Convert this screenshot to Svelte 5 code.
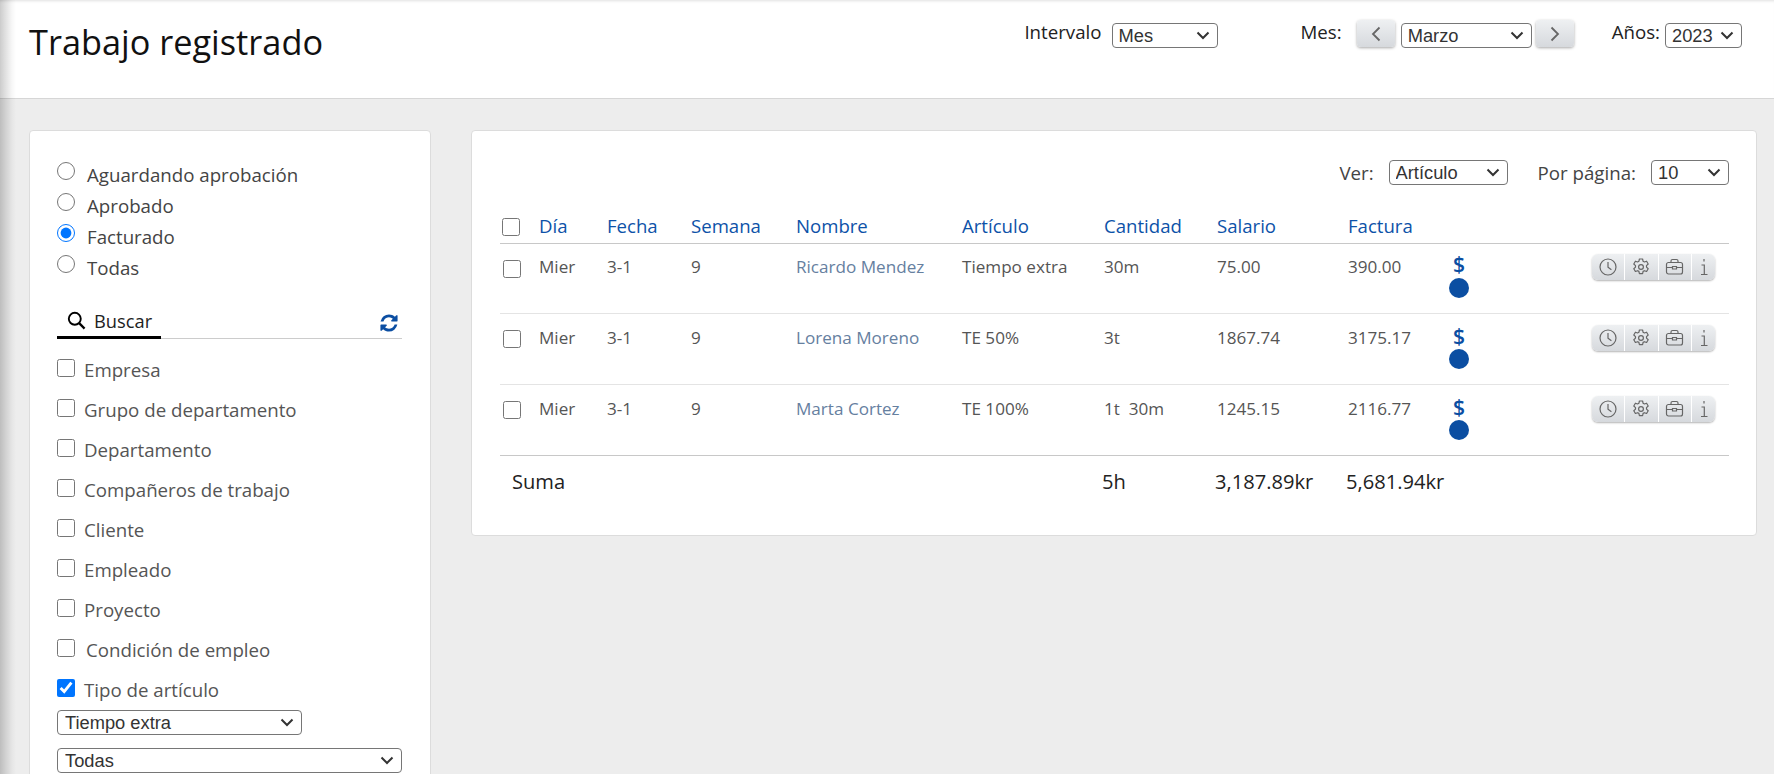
<script>
  const radios = [
    { label: 'Aguardando aprobación', checked: false },
    { label: 'Aprobado', checked: false },
    { label: 'Facturado', checked: true },
    { label: 'Todas', checked: false }
  ];
  const filters = ['Empresa', 'Grupo de departamento', 'Departamento', 'Compañeros de trabajo', 'Cliente', 'Empleado', 'Proyecto', 'Condición de empleo'];
  const heads = ['Día', 'Fecha', 'Semana', 'Nombre', 'Artículo', 'Cantidad', 'Salario', 'Factura'];
  const rows = [
    ['Mier', '3-1', '9', 'Ricardo Mendez', 'Tiempo extra', '30m', '75.00', '390.00'],
    ['Mier', '3-1', '9', 'Lorena Moreno', 'TE 50%', '3t', '1867.74', '3175.17'],
    ['Mier', '3-1', '9', 'Marta Cortez', 'TE 100%', '1t\u00a0\u00a030m', '1245.15', '2116.77']
  ];
</script>

<div class="page">
  <div class="edge"></div>
  <header class="top">
    <h1>Trabajo registrado</h1>
    <div class="controls">
      <span class="lbl l-int">Intervalo</span>
      <select class="s-int"><option>Mes</option></select>
      <span class="lbl l-mes">Mes:</span>
      <button class="nav" aria-label="Anterior"><svg width="12" height="16" viewBox="0 0 12 16"><path d="M9.500 1.500 3 8l6.500 6.500" fill="none" stroke="#666" stroke-width="1.800"/></svg></button>
      <select class="s-mes"><option>Marzo</option></select>
      <button class="nav" aria-label="Siguiente"><svg width="12" height="16" viewBox="0 0 12 16"><path d="M2.500 1.500 9 8l-6.500 6.500" fill="none" stroke="#666" stroke-width="1.800"/></svg></button>
      <span class="lbl l-anos">Años:</span>
      <select class="s-anos"><option>2023</option></select>
    </div>
  </header>

  <main class="content">
    <aside class="card side">
      <div class="radios">
        {#each radios as r}
          <label class="radio"><input type="radio" name="st" checked={r.checked} /><span>{r.label}</span></label>
        {/each}
      </div>
      <div class="search">
        <div class="tab">
          <svg width="19" height="19" viewBox="0 0 20 20"><circle cx="8.200" cy="8.200" r="6.300" fill="none" stroke="#000" stroke-width="2"/><path d="m12.800 12.800 5.700 5.700" stroke="#000" stroke-width="2.400"/></svg>
          <span>Buscar</span>
        </div>
        <svg class="sync" width="20" height="20" viewBox="0 0 1792 1792"><path fill="#0b4ea2" d="M1639 1056q0 5-1 7-64 268-268 434.500t-478 166.500q-146 0-282.500-55t-243.500-157l-129 129q-19 19-45 19t-45-19-19-45v-448q0-26 19-45t45-19h448q26 0 45 19t19 45-19 45l-137 137q71 66 161 102t187 36q134 0 250-65t186-179q11-17 53-117 8-23 30-23h192q13 0 22.500 9.500t9.500 22.500zm25-800v448q0 26-19 45t-45 19h-448q-26 0-45-19t-19-45 19-45l138-138q-148-137-349-137-134 0-250 65t-186 179q-11 17-53 117-8 23-30 23h-199q-13 0-22.500-9.500t-9.500-22.500v-7q65-268 270-434.500t480-166.500q146 0 284 55.500t245 156.500l130-129q19-19 45-19t45 19 19 45z"/></svg>
      </div>
      <div class="filters">
        {#each filters as f, i}
          <label class="check" class:wide={i === 7}><input type="checkbox" /><span>{f}</span></label>
        {/each}
        <label class="check"><input type="checkbox" checked /><span>Tipo de artículo</span></label>
      </div>
      <select class="s-tipo"><option>Tiempo extra</option></select>
      <select class="s-todas"><option>Todas</option></select>
    </aside>

    <section class="card list">
      <div class="tools">
        <span class="lbl l-ver">Ver:</span>
        <select class="s-ver"><option>Artículo</option></select>
        <span class="lbl l-por">Por página:</span>
        <select class="s-por"><option>10</option></select>
      </div>
      <div class="grid head">
        <input type="checkbox" />
        {#each heads as h}<span>{h}</span>{/each}
      </div>
      {#each rows as row, ri}
        <div class="grid row" class:first={ri === 0} class:last={ri === 2}>
          <input type="checkbox" />
          {#each row as c, i}<span class:name={i === 3}>{c}</span>{/each}
          <div class="status"><span class="dollar">$</span><span class="dot"></span></div>
          <div class="actions">
            <button aria-label="Tiempo"><svg width="18" height="18" viewBox="0 0 18 18" fill="none" stroke="#666" stroke-width="1.200"><circle cx="9" cy="9" r="8"/><path d="M9 4v5.200l3.400 2.600"/></svg></button>
            <button aria-label="Ajustes"><svg width="18" height="18" viewBox="0 0 18 18" fill="none" stroke="#666" stroke-width="1.200"><circle cx="9" cy="9" r="2.400"/><path d="M7.400 1h3.200l.5 2.300 1.300.7 2.200-.8 1.600 2.800-1.700 1.600v1.500l1.700 1.600-1.600 2.800-2.200-.8-1.300.7-.5 2.300H7.400l-.5-2.300-1.300-.7-2.200.8-1.600-2.800 1.700-1.600V7.600L1.800 6l1.600-2.800 2.200.8 1.300-.7z" stroke-linejoin="round"/></svg></button>
            <button aria-label="Trabajo"><svg width="19" height="18" viewBox="0 0 19 18" fill="none" stroke="#666" stroke-width="1.200"><rect x="1.500" y="4.500" width="16" height="11.500" rx="2"/><path d="M6 4.500V3a1.500 1.500 0 0 1 1.500-1.500h4A1.500 1.500 0 0 1 13 3v1.500M1.500 9.500h6M11.500 9.500h6M7.500 8.500h4v2.500h-4z"/></svg></button>
            <button aria-label="Información" class="i"><svg width="10" height="18" viewBox="0 0 10 18" fill="none" stroke="#666" stroke-width="1.200"><path d="M5 1v2.500M2.500 7H5.300v9M2 16.500h6.500"/></svg></button>
          </div>
        </div>
      {/each}
      <div class="grid sum">
        <span class="suma">Suma</span>
        <span class="v1">5h</span>
        <span class="v2">3,187.89kr</span>
        <span class="v3">5,681.94kr</span>
      </div>
    </section>
  </main>
</div>

<style>
  :global(body) { margin: 0; background: #ededed; font-family: "Open Sans", sans-serif; }
  .page { position: relative; height: 774px; overflow: hidden; background: #ededed; color: #333; }
  .edge { position: absolute; left: 0; top: 0; bottom: 0; width: 16px; z-index: 2; pointer-events: none; background: linear-gradient(to right, rgba(0,0,0,.2), rgba(0,0,0,.13) 30%, rgba(0,0,0,.03) 75%, rgba(0,0,0,0)); }
  .top { height: 99px; box-sizing: border-box; background: #fff; border-bottom: 1px solid #d6d6d6; box-shadow: inset 0 3px 3px -2px rgba(0,0,0,.12); display: flex; justify-content: space-between; padding: 0 32px 0 29px; position: relative; }
  h1 { margin: 19px 0 0; font-size: 34.300px; line-height: 46px; font-weight: 400; color: #111; }
  .controls { display: flex; align-items: flex-start; padding-top: 20px; }
  .lbl { font-size: 18.700px; line-height: 24px; color: #222; white-space: nowrap; }
  .l-int { margin-right: 10px; }
  .l-mes { margin-left: 83px; margin-right: 15px; }
  .l-anos { margin-left: 38px; margin-right: 5px; }
  select {
    appearance: none;
    -webkit-appearance: none;
    height: 25px;
    box-sizing: border-box;
    font-family: "Liberation Sans", Arial, sans-serif;
    font-size: 18.300px;
    color: #333;
    background-color: #fff;
    background-image: url("data:image/svg+xml,%3Csvg xmlns='http://www.w3.org/2000/svg' width='14' height='9' viewBox='0 0 14 9'%3E%3Cpath d='M1.500 1.500 7 7l5.500-5.500' fill='none' stroke='%23333' stroke-width='2'/%3E%3C/svg%3E");
    background-repeat: no-repeat;
    background-position: right 7px center;
    border: 1px solid #767676;
    border-radius: 4px;
    padding: 0 0 0 6px;
    display: block;
  }
  .controls select { margin-top: 3px; }
  .s-int { width: 106px; }
  .s-mes { width: 131px; margin: 3px 4px 0 6px; }
  .s-anos { width: 77px; }
  .nav { width: 38px; height: 27px; padding: 0; display: flex; align-items: center; justify-content: center; border: 0; border-radius: 4px; background: linear-gradient(#eef0f2, #d6d9dd); box-shadow: 0 1px 3px rgba(0,0,0,.35); }
  .content { display: flex; gap: 40px; padding: 31px 17px 0 29px; align-items: flex-start; }
  .card { background: #fff; border: 1px solid #dcdcdc; border-radius: 4px; box-sizing: border-box; }
  .side { width: 402px; flex: none; padding: 31px 27px 30px; }
  .radios { display: flex; flex-direction: column; gap: 7px; }
  .radio { display: flex; align-items: flex-start; height: 24px; font-size: 18.700px; color: #444; line-height: 24px; }
  .radio input { width: 18px; height: 18px; margin: 0 12px 0 0; }
  .radio span { position: relative; top: 1px; }
  .search { display: flex; justify-content: space-between; align-items: flex-end; margin-top: 20px; height: 40px; border-bottom: 1px solid #ccc; box-sizing: border-box; width: 345px; padding-right: 3px; }
  .tab { width: 104px; box-sizing: border-box; height: 33px; padding-left: 10px; display: flex; gap: 8px; font-size: 18.300px; color: #222; border-bottom: 3px solid #000; margin-bottom: -1px; line-height: 30px; align-items: flex-start; }
  .tab svg { margin-top: 5px; }
  .sync { margin-bottom: 5px; }
  .filters { display: flex; flex-direction: column; gap: 16px; margin-top: 20px; }
  .check { display: flex; align-items: flex-start; height: 24px; font-size: 18.700px; line-height: 24px; color: #555; }
  .check input { width: 18px; height: 18px; margin: 0 9px 0 0; }
  .check.wide input { margin-right: 11px; }
  .check span { position: relative; top: -1px; }
  .s-tipo { width: 245px; margin-top: 7px; padding-left: 7px; }
  .s-todas { width: 345px; margin-top: 13px; padding-left: 7px; }
  .list { flex: 1; height: 406px; padding: 29px 27px 0 28px; }
  .tools { display: flex; justify-content: flex-end; align-items: flex-start; height: 53px; }
  .tools .lbl { line-height: 25px; color: #444; }
  .l-ver { margin-right: 15px; }
  .s-ver { width: 119px; }
  .l-por { margin-left: 30px; margin-right: 15px; }
  .s-por { width: 78px; }
  .grid { display: grid; grid-template-columns: 39px 68px 84px 105px 166px 142px 113px 131px 100px 22px 1fr; width: 1229px; }
  .grid > input { width: 18px; height: 18px; margin: 0; }
  .head { height: 30px; border-bottom: 1px solid #c8c8c8; box-sizing: content-box; font-size: 18.600px; line-height: 26px; color: #0d52a8; }
  .head > input { margin-left: 2px; margin-top: 5px; }
  .row { height: 69px; padding-top: 1px; border-bottom: 1px solid #e4e4e4; font-size: 17.100px; color: #555; line-height: 22px; }
  .row.first { padding-top: 0; }
  .row > span { margin-top: 12px; white-space: nowrap; }
  .row.last { border-bottom-color: #c8c8c8; }
  .row > input { margin: 15px 0 0 3px; }
  .row.first > input { margin-top: 16px; }
  .name { color: #66809f; }
  .status { grid-column: 10; display: flex; flex-direction: column; align-items: center; margin-top: 11px; }
  .row.first .status { margin-top: 10px; }
  .dollar { font-size: 21px; line-height: 21px; font-weight: 600; color: #0b4ea2; height: 21px; }
  .dot { width: 20px; height: 20px; border-radius: 50%; background: #0b4ea2; margin-top: 2px; }
  .row.first .dot { margin-top: 3px; }
  .actions { grid-column: 11; justify-self: end; margin: 10px 14px 0 0; display: flex; height: 26px; border-radius: 6px; overflow: hidden; box-shadow: 0 1px 2px rgba(0,0,0,.3); }
  .actions button { width: 33.500px; height: 26px; padding: 0; border: 0; border-right: 1px solid #fff; background: linear-gradient(#eef0f2, #d6d9dd); display: flex; align-items: center; justify-content: center; }
  .actions button.i { width: 23px; border-right: 0; }
  .sum { height: 50px; font-size: 20.100px; line-height: 26px; color: #222; padding-top: 13px; }
  .suma { grid-column: 1 / 6; grid-row: 1; margin-left: 12px; }
  .v1 { grid-column: 7; grid-row: 1; margin-left: -2px; }
  .v2 { grid-column: 8; margin-left: -2px; white-space: nowrap; }
  .v3 { grid-column: 9; margin-left: -2px; white-space: nowrap; }
</style>
